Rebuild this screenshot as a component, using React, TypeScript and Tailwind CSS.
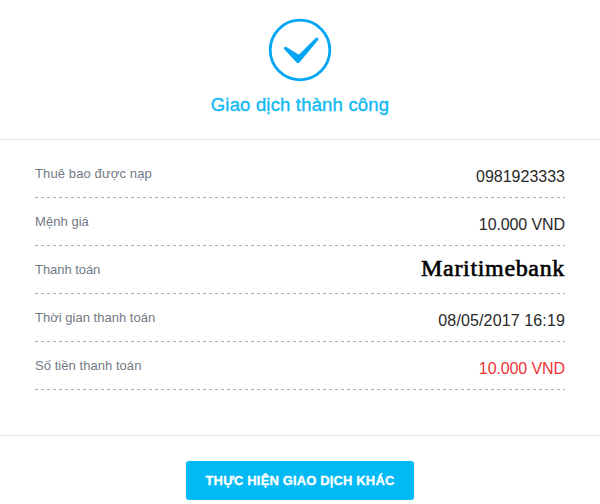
type Row = { label: string; value: string; labelClass: string; valueClass: string };

const sans = "pt-[18px] text-[16px] leading-[18px]";

const rows: Row[] = [
  { label: "Thuê bao được nạp", value: "0981923333", labelClass: "tracking-[0.12px]", valueClass: `${sans} text-[#282828]` },
  { label: "Mệnh giá", value: "10.000 VND", labelClass: "tracking-[0.05px]", valueClass: `${sans} tracking-[-0.1px] text-[#282828]` },
  {
    label: "Thanh toán",
    value: "Maritimebank",
    labelClass: "tracking-[-0.05px]",
    valueClass:
      "pt-[8px] font-['Liberation_Serif',serif] text-[24px] leading-[28px] tracking-[0.66px] text-black [-webkit-text-stroke:0.6px_#000]",
  },
  { label: "Thời gian thanh toán", value: "08/05/2017 16:19", labelClass: "tracking-[0.02px]", valueClass: `${sans} tracking-[0.13px] text-[#282828]` },
  { label: "Số tiền thanh toán", value: "10.000 VND", labelClass: "tracking-[0.05px]", valueClass: `${sans} tracking-[-0.1px] text-[#ee3338]` },
];

function SuccessIcon() {
  return (
    <svg className="h-[64px] w-[64px]" viewBox="0 0 64 64" fill="none">
      <circle cx="32" cy="32" r="29.8" stroke="#03a5f5" strokeWidth="2.8" />
      <path
        d="M18.4 28.9c-1.6-.8-3.4.8-2.2 2.3L28.6 44.6c.8.9 2 .9 2.8 0L50 22.2c1.2-1.7-.7-3.6-2.3-2.3L31.6 35.9c-.6.6-1.4.6-2 .2z"
        fill="#03a5f5"
      />
    </svg>
  );
}

export default function App() {
  return (
    <main className="flex h-[504px] w-[600px] flex-col overflow-hidden bg-white font-['Liberation_Sans',Arial,sans-serif]">
      <header className="flex h-[140px] flex-col items-center border-b border-[#e6e6e6] pt-[18px]">
        <SuccessIcon />
        <h1 className="mt-[12px] text-[18.5px] leading-[22px] tracking-[0.18px] whitespace-nowrap text-[#14b9f3] [-webkit-text-stroke:0.4px_#14b9f3]">
          Giao dịch thành công
        </h1>
      </header>

      <section className="h-[296px] border-b border-[#e6e6e6] px-[35px] pt-[10px]">
        {rows.map((row) => (
          <div
            key={row.label}
            className="flex h-[48px] justify-between bg-[repeating-linear-gradient(90deg,#a9adb3_0_3px,transparent_3px_6px)] bg-[length:100%_1px] bg-bottom bg-no-repeat"
          >
            <span className={`pt-[16px] text-[13px] leading-[16px] whitespace-nowrap text-[#727985] ${row.labelClass}`}>{row.label}</span>
            <span className={`whitespace-nowrap ${row.valueClass}`}>{row.value}</span>
          </div>
        ))}
      </section>

      <footer className="flex justify-center pt-[25px]">
        <button className="h-[39px] w-[228px] rounded-[3px] bg-[#00b9f5] text-[13px] leading-[16px] font-bold tracking-[0.14px] whitespace-nowrap text-white [-webkit-text-stroke:0.3px_#fff]">
          THỰC HIỆN GIAO DỊCH KHÁC
        </button>
      </footer>
    </main>
  );
}
